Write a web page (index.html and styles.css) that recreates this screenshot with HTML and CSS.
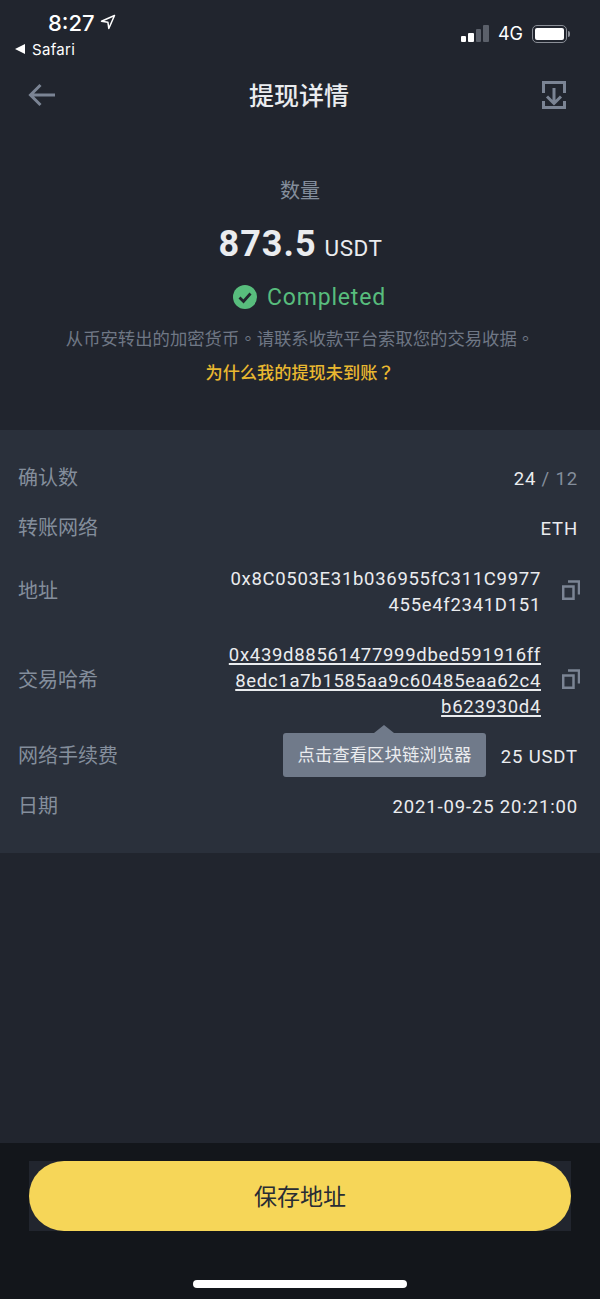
FILE: index.html
```html
<!DOCTYPE html>
<html lang="zh">
<head>
<meta charset="utf-8">
<title>提现详情</title>
<link rel="stylesheet" href="styles.css">
</head>
<body>
<div class="page">
  <div class="status">
    <div class="status-left">
      <div class="time-row"><span class="time">8:27</span>
        <svg class="loc" width="16" height="16" viewBox="0 0 16 16"><path d="M14.500 1.500 1.500 7.200l6.400 1 .9 6.300z" fill="none" stroke="#fff" stroke-width="1.500" stroke-linejoin="round"/></svg>
      </div>
      <div class="back-app"><span class="tri"></span><span>Safari</span></div>
    </div>
    <div class="status-right">
      <div class="signal"><i class="b1"></i><i class="b2"></i><i class="b3"></i><i class="b4"></i></div>
      <span class="net">4G</span>
      <div class="battery"><div class="fill"></div></div><div class="nub"></div>
    </div>
  </div>

  <header class="nav">
    <svg width="28" height="24" viewBox="0 0 28 24"><path d="M27 12H3M12.500 2 2.500 12l10 10" fill="none" stroke="#7b8494" stroke-width="3"/></svg>
    <h1 class="title">提现详情</h1>
    <svg width="24" height="28" viewBox="0 0 24 28"><path d="M1.500 12V1.500H22.500V12M1.500 20V26.500H22.500V20M12 7V22M5 15.500 12 22.500l7-7" fill="none" stroke="#7b8494" stroke-width="3"/></svg>
  </header>

  <section class="summary">
    <div class="sum-label">数量</div>
    <div class="amount"><span class="num">873.5</span><span class="unit">USDT</span></div>
    <div class="state">
      <svg width="24" height="24" viewBox="0 0 24 24"><circle cx="12" cy="12" r="12" fill="#58bd7d"/><path d="M6.500 12.500 10.500 16.500 17.500 8.500" fill="none" stroke="#21252e" stroke-width="2.800"/></svg>
      <span>Completed</span>
    </div>
    <p class="desc">从币安转出的加密货币<span class="tc" lang="zh-TW">。</span>请联系收款平台索取您的交易收据<span class="tc" lang="zh-TW">。</span></p>
    <a class="why">为什么我的提现未到账<span class="tc" lang="zh-TW">？</span></a>
  </section>

  <section class="details">
    <div class="row"><span class="label">确认数</span><span class="value">24 <em>/ 12</em></span></div>
    <div class="row"><span class="label">转账网络</span><span class="value">ETH</span></div>
    <div class="row"><span class="label">地址</span>
      <div class="val-icon"><span class="value long">0x8C0503E31b036955fC311C9977<br>455e4f2341D151</span>
        <svg class="copy" width="18" height="20" viewBox="0 0 18 20"><path d="M1.200 6.500h10.300V18.800H1.200zM6 1.500h11v13" fill="none" stroke="#7b8494" stroke-width="2.500"/></svg>
      </div>
    </div>
    <div class="row"><span class="label">交易哈希</span>
      <div class="val-icon"><a class="value long link">0x439d88561477999dbed591916ff<br>8edc1a7b1585aa9c60485eaa62c4<br>b623930d4</a>
        <svg class="copy" width="18" height="20" viewBox="0 0 18 20"><path d="M1.200 6.500h10.300V18.800H1.200zM6 1.500h11v13" fill="none" stroke="#7b8494" stroke-width="2.500"/></svg>
      </div>
    </div>
    <div class="row tip-row"><span class="label">网络手续费</span><span class="value">25 USDT</span>
      <div class="tooltip">点击查看区块链浏览器</div>
    </div>
    <div class="row"><span class="label">日期</span><span class="value">2021-09-25 20:21:00</span></div>
  </section>

  <div class="spacer"></div>

  <footer class="footer">
    <div class="btn-back"><button class="btn">保存地址</button></div>
    <div class="home"></div>
  </footer>
</div>
</body>
</html>
```

FILE: styles.css
```css
* { box-sizing: border-box; }
html, body { margin: 0; padding: 0; }
body {
  background: #21252e;
  font-family: Roboto, "Noto Sans CJK SC", sans-serif;
  color: #eaecef;
}
.page { width: 600px; height: 1299px; display: flex; flex-direction: column; overflow: hidden; }
.tc { font-family: "Noto Sans CJK TC", sans-serif; }

.status { height: 72px; display: flex; justify-content: space-between; padding: 9px 30px 0 15px; }
.status-left { display: flex; flex-direction: column; }
.time-row { display: flex; align-items: center; gap: 5px; padding-left: 33px; height: 28px; }
.time { font-family: Inter, sans-serif; font-size: 22px; font-weight: 500; color: #fff; }
.loc { margin-top: -2px; }
.back-app { display: flex; align-items: center; gap: 7px; height: 24px; font-family: Inter, sans-serif; font-size: 15px; color: #fff; letter-spacing: .3px; }
.tri { width: 0; height: 0; border-style: solid; border-width: 5px 10px 5px 0; border-color: transparent #fff transparent transparent; }
.status-right { display: flex; align-items: center; height: 49px; }
.signal { display: flex; align-items: flex-end; gap: 2px; height: 17px; margin-right: 9px; }
.signal i { width: 5.500px; display: block; border-radius: 1px; }
.b1 { height: 6px; background: #fff; }
.b2 { height: 9px; background: #fff; }
.b3 { height: 13px; background: #5b606a; }
.b4 { height: 17px; background: #5b606a; }
.net { font-family: Inter, sans-serif; font-size: 18px; color: #fff; margin-right: 9px; }
.battery { width: 35px; height: 18px; border: 1.500px solid #8b8f97; border-radius: 5px; padding: 2px; }
.fill { width: 100%; height: 100%; background: #fff; border-radius: 2px; }
.nub { width: 2px; height: 6px; background: #8b8f97; border-radius: 0 2px 2px 0; margin-left: 1px; }

.nav { height: 46px; margin-bottom: 2px; display: flex; align-items: center; justify-content: space-between; padding: 0 34px 0 28px; }
.title { margin: 0 0 2px; font-size: 25px; font-weight: 500; color: #eaecef; }

.summary { height: 310px; display: flex; flex-direction: column; align-items: center; padding-top: 58px; }
.sum-label { font-size: 20px; line-height: 26px; color: #848e9c; }
.amount { display: flex; align-items: baseline; gap: 8px; margin: 16px 0 0 1px; line-height: 48px; }
.num { font-size: 36px; font-weight: 700; letter-spacing: 1px; color: #eaecef; }
.unit { font-size: 22.500px; color: #eaecef; letter-spacing: .5px; }
.state { display: flex; align-items: center; gap: 10px; margin: 10px 0 0 19px; height: 30px; font-size: 23px; font-weight: 400; color: #58bd7d; letter-spacing: .8px; }
.desc { margin: 13px 0 0; font-size: 17.350px; line-height: 26px; color: #6f7785; }
.why { margin-top: 7px; font-size: 17.200px; line-height: 26px; color: #e9b830; font-weight: 500; }

.details { background: #2a303b; padding: 35px 22px 34px 18px; display: flex; flex-direction: column; gap: 24px; }
.row { display: flex; justify-content: space-between; align-items: center; position: relative; }
.label { font-size: 20px; line-height: 26px; color: #848e9c; }
.value { font-size: 18.500px; line-height: 26px; padding-top: 1px; margin-bottom: -1px; color: #eaecef; letter-spacing: .85px; text-align: right; }
.value em { font-style: normal; color: #848e9c; }
.val-icon { display: flex; align-items: center; gap: 21px; margin-right: -2px; }
.copy { margin-bottom: 2px; }
.long { display: block; letter-spacing: .7px; }
.link { text-decoration: underline; text-decoration-thickness: 1.500px; text-underline-offset: 2px; }
.tooltip { position: absolute; left: 265px; top: -10px; width: 203px; height: 44px; background: #707a8a; color: #eaecef; border-radius: 3px; font-size: 17.400px; line-height: 45px; text-align: center; }
.tooltip::before { content: ""; position: absolute; left: 91px; top: -8px; width: 0; height: 0; border-style: solid; border-width: 0 10px 8px; border-color: transparent transparent #707a8a; }

.spacer { flex: 1; }
.footer { height: 156px; background: #13161b; padding: 18px 29px 0; display: flex; flex-direction: column; align-items: center; }
.btn-back { width: 542px; height: 70px; background: #21252e; }
.btn { display: block; width: 100%; height: 100%; border: 0; border-radius: 35px; background: #f6d658; color: #282c34; font-family: "Noto Sans CJK SC", sans-serif; font-size: 23px; padding: 0 0 2px; }
.home { width: 214px; height: 8px; border-radius: 4px; background: #fff; margin-top: 49px; }
```
